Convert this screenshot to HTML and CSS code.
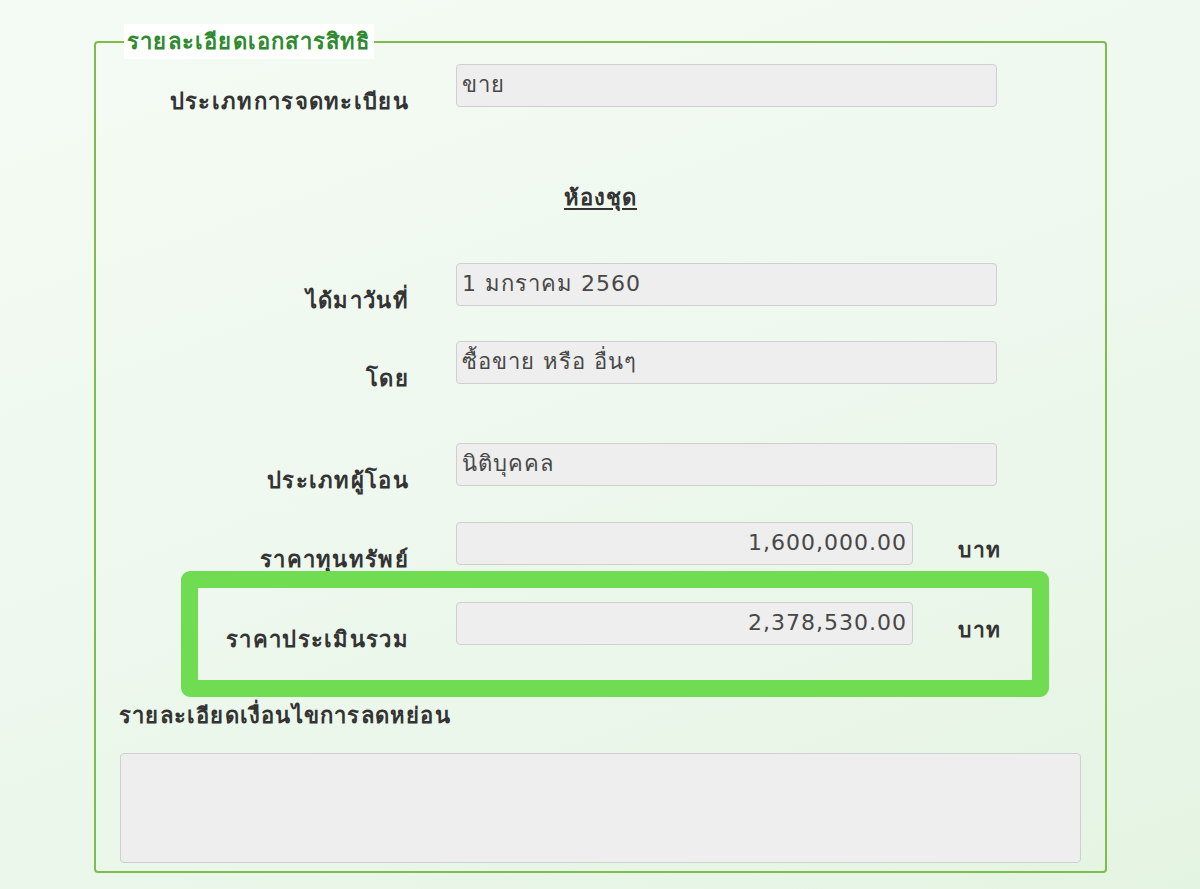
FILE: index.html
```html
<!DOCTYPE html>
<html lang="th">
<head>
<meta charset="utf-8">
<title>รายละเอียดเอกสารสิทธิ</title>
<link rel="stylesheet" href="styles.css">
</head>
<body>
<div class="page">
  <fieldset class="doc">
    <legend class="doc-legend">รายละเอียดเอกสารสิทธิ</legend>

    <div class="row row-1">
      <label class="lbl">ประเภทการจดทะเบียน</label>
      <div class="field wide">ขาย</div>
    </div>

    <div class="section-title"><span>ห้องชุด</span></div>

    <div class="row row-2">
      <label class="lbl">ได้มาวันที่</label>
      <div class="field wide">1 มกราคม 2560</div>
    </div>

    <div class="row row-3">
      <label class="lbl">โดย</label>
      <div class="field wide">ซื้อขาย หรือ อื่นๆ</div>
    </div>

    <div class="row row-4">
      <label class="lbl">ประเภทผู้โอน</label>
      <div class="field wide">นิติบุคคล</div>
    </div>

    <div class="row row-5">
      <label class="lbl">ราคาทุนทรัพย์</label>
      <div class="field short num">1,600,000.00</div>
      <span class="unit">บาท</span>
    </div>

    <div class="row row-6">
      <label class="lbl">ราคาประเมินรวม</label>
      <div class="field short num">2,378,530.00</div>
      <span class="unit">บาท</span>
    </div>

    <div class="highlight"></div>

    <div class="note-title">รายละเอียดเงื่อนไขการลดหย่อน</div>
    <div class="note-box"></div>
  </fieldset>
</div>
</body>
</html>
```

FILE: styles.css
```css
html, body {
  margin: 0;
  padding: 0;
}
body {
  width: 1200px;
  height: 889px;
  overflow: hidden;
  background: linear-gradient(160deg, #f4fbf4 0%, #eef8ee 50%, #e4f4e2 100%);
  font-family: "DejaVu Sans", "Noto Sans", sans-serif;
  color: #333;
}
.page {
  padding: 24px 0 0 94px;
}
.doc {
  position: relative;
  box-sizing: border-box;
  width: 1013px;
  height: 849px;
  margin: 0;
  padding: 0;
  border: 2px solid #7dbd4b;
  border-radius: 4px;
}
.doc-legend {
  margin-left: 28px;
  padding: 4px 3px 4px 3px;
  background: #ffffff;
  color: #2f8a2f;
  font-weight: bold;
  font-size: 22px;
  letter-spacing: 1.2px;
  line-height: 27px;
}
.row {
  display: flex;
  align-items: flex-end;
}
.lbl {
  width: 313px;
  text-align: right;
  font-weight: bold;
  font-size: 22px;
  letter-spacing: 1.3px;
  line-height: 30px;
  color: #333;
  margin-right: 47px;
  margin-bottom: -10px;
}
.field {
  box-sizing: border-box;
  height: 43px;
  background: #eeeeee;
  border: 1px solid #cfcfcf;
  border-radius: 4px;
  padding: 0 5px;
  font-size: 22px;
  letter-spacing: 1px;
  line-height: 40px;
  color: #474747;
}
.wide { width: 541px; }
.short { width: 457px; }
.num { text-align: right; padding-right: 5px; }
.unit {
  margin-left: 45px;
  font-weight: bold;
  font-size: 21px;
  letter-spacing: 1.5px;
  line-height: 30px;
  align-self: center;
  margin-top: 16px;
  color: #333;
}
.row-1 { margin-top: 5px; }
.section-title {
  margin-top: 76px;
  text-align: center;
  font-weight: bold;
  font-size: 22px;
  letter-spacing: 1px;
  line-height: 30px;
}
.section-title span { text-decoration: underline; text-underline-offset: 3px; }
.row-2 { margin-top: 50px; }
.row-3 { margin-top: 35px; }
.row-4 { margin-top: 59px; }
.row-5 { margin-top: 33px; }
.row-6 { margin-top: 34px; }
.highlight {
  position: absolute;
  left: 85px;
  top: 512px;
  width: 868px;
  height: 126px;
  box-sizing: border-box;
  border: 17px solid #6fdc52;
  border-radius: 9px;
  pointer-events: none;
}
.note-title {
  margin: 56px 0 0 23px;
  font-weight: bold;
  font-size: 22px;
  letter-spacing: 1.2px;
  line-height: 30px;
}
.note-box {
  box-sizing: border-box;
  margin: 22px 0 0 24px;
  width: 961px;
  height: 110px;
  background: #eeeeee;
  border: 1px solid #cfcfcf;
  border-radius: 4px;
}
```
